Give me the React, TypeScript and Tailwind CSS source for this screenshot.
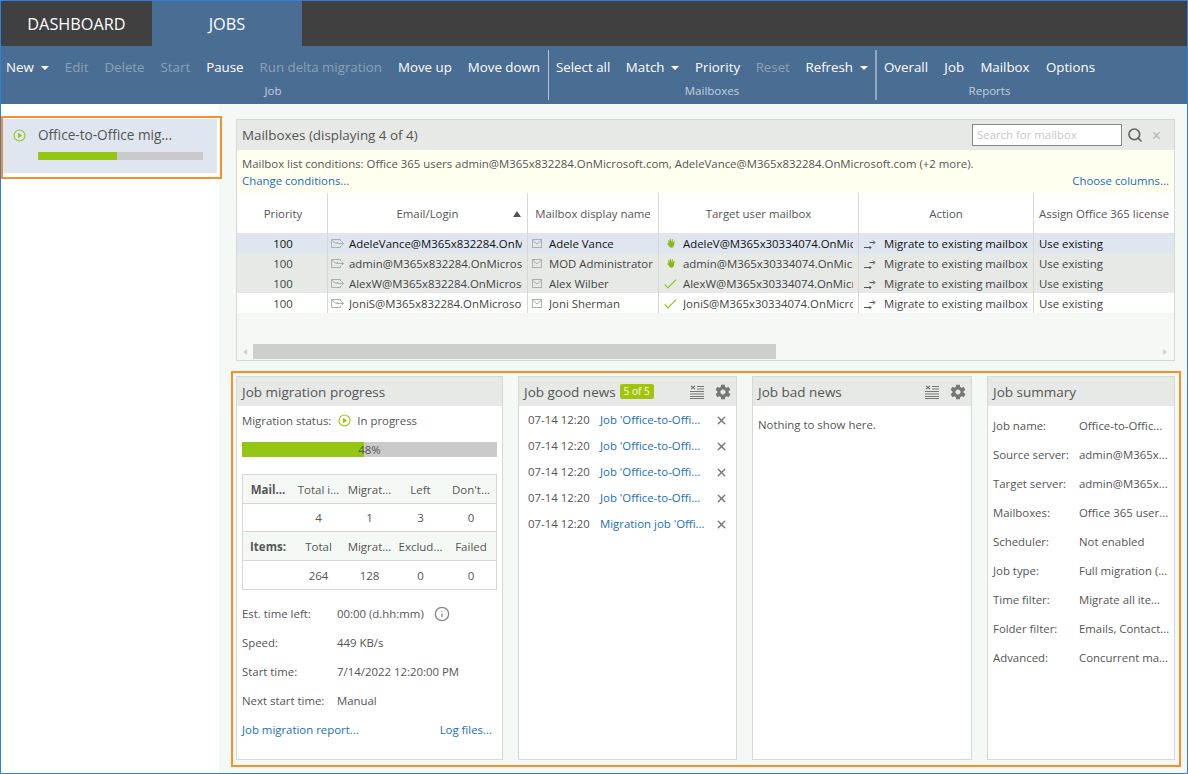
import { Search, X, Info } from "lucide-react";
import { IoMdSettings } from "react-icons/io";
import type { ReactNode } from "react";

// toolbar groups: [label, disabled, has dropdown]
type Btn = [string, boolean?, boolean?];

const jobBtns: Btn[] = [["New", false, true], ["Edit", true], ["Delete", true], ["Start", true], ["Pause"], ["Run delta migration", true], ["Move up"], ["Move down"]];
const mailboxBtns: Btn[] = [["Select all"], ["Match", false, true], ["Priority"], ["Reset", true], ["Refresh", false, true]];
const reportBtns: Btn[] = [["Overall"], ["Job"], ["Mailbox"], ["Options"]];

const rows = [
  { email: "AdeleVance@M365x832284.OnMicrosoft.com", name: "Adele Vance", target: "AdeleV@M365x30334074.OnMicrosoft.com", status: "hand", bg: "bg-[#dfe6ef]", text: "text-[#111]" },
  { email: "admin@M365x832284.OnMicrosoft.com", name: "MOD Administrator", target: "admin@M365x30334074.OnMicrosoft.com", status: "hand", bg: "bg-[#e6e9e6]", text: "text-[#444]" },
  { email: "AlexW@M365x832284.OnMicrosoft.com", name: "Alex Wilber", target: "AlexW@M365x30334074.OnMicrosoft.com", status: "check", bg: "bg-[#e6e9e6]", text: "text-[#444]" },
  { email: "JoniS@M365x832284.OnMicrosoft.com", name: "Joni Sherman", target: "JoniS@M365x30334074.OnMicrosoft.com", status: "check", bg: "bg-white", text: "text-[#444]" },
];

const PlayCircle = () => (
  <svg width="13" height="13" viewBox="0 0 13 13" className="shrink-0">
    <circle cx="6.5" cy="6.5" r="5.5" fill="none" stroke="#94c614" strokeWidth="1.1" />
    <path d="M5 3.8v5.4l4.2-2.7z" fill="#94c614" />
  </svg>
);

const Envelope = () => (
  <svg width="16" height="11" viewBox="0 0 16 11" className="shrink-0">
    <rect x="1.5" y="1.5" width="9" height="8" fill="none" stroke="#aab0aa" />
    <path d="M1.5 2l4.5 4 4.5-4" fill="none" stroke="#aab0aa" />
  </svg>
);

const EnvelopeArrow = () => (
  <svg width="16" height="11" viewBox="0 0 16 11" className="shrink-0">
    <path d="M9.500 3V1.500H.5v8h9V8" fill="none" stroke="#aab0aa" />
    <path d="M.5 2L5 5.500l2-1.500" fill="none" stroke="#aab0aa" />
    <path d="M5.500 5.500h7M10.500 3.500l2 2-2 2" fill="none" stroke="#aab0aa" />
  </svg>
);

const Hand = () => (
  <svg width="11" height="11" viewBox="0 0 12 12" className="shrink-0">
    <path d="M2.800 6.500L2.500 3c0-.7 1-.7 1.100 0l.4 2 .1-3.600c0-.7 1.100-.7 1.100 0L5.800 5l.6-3.500c.1-.7 1.100-.6 1.100.1L7.200 5.300l1.300-2c.4-.6 1.200-.2.9.5L8.700 7.500c-.3 2-1.300 3-2.700 3-1.300 0-2-.6-2.700-1.600L1.500 6.600c-.4-.6.300-1.200.9-.7z" fill="#8fb80f" />
  </svg>
);

const Tick = () => (
  <svg width="13" height="10" viewBox="0 0 13 10" className="shrink-0">
    <path d="M.7 5.500l3.300 3.300L12 .7" fill="none" stroke="#94c614" strokeWidth="1.200" />
  </svg>
);

const Arrows = () => (
  <svg width="14" height="12" viewBox="0 0 14 12" className="shrink-0">
    <path d="M1 9.500h7M6.500 8L8 9.500 6.500 11" fill="none" stroke="#555" />
    <path d="M6.500 4.500h5M10 2.500l2 2-2 2" fill="none" stroke="#555" />
  </svg>
);

const ClearList = () => (
  <svg width="14" height="14" viewBox="0 0 14 14" className="shrink-0">
    <path d="M1 .8l4 3.400M5 .8L1 4.200" stroke="#666" strokeWidth="1.100" />
    <path d="M7 1.500h7M7 4h7M0 6.500h14M0 9h14M0 11.500h14M0 13.500h14" stroke="#777" />
  </svg>
);

const Caret = () => <span className="ml-[7px] mb-[1px] inline-block border-x-[4.5px] border-t-[4.5px] border-x-transparent border-t-white" />;

const ToolGroup = ({ label, btns, className }: { label: string; btns: Btn[]; className: string }) => (
  <div className={`flex flex-col ${className}`}>
    <div className="flex h-[32px] items-center justify-between pt-[12px]">
      {btns.map(([text, disabled, drop]) => (
        <span key={text} className={`flex items-center whitespace-nowrap text-[13.300px] ${disabled ? "text-[#8fa0b3]" : "text-white"}`}>
          {text}
          {drop && <Caret />}
        </span>
      ))}
    </div>
    <div className="mt-[5px] text-center text-[11.500px] leading-[16px] text-[#c3d0dd]">{label}</div>
  </div>
);

const Panel = ({ title, extra, children, className }: { title: string; extra?: ReactNode; children: ReactNode; className: string }) => (
  <div className={`flex flex-col border border-[#d5d8d5] bg-white ${className}`}>
    <div className="flex h-[29px] shrink-0 items-center bg-[#e6e9e6] px-[5px] pt-[1px] text-[13.500px] text-[#555]">
      {title}
      {extra}
    </div>
    {children}
  </div>
);

const NewsTools = () => (
  <div className="ml-auto -mr-[5px] mb-[1px] flex items-center gap-[10px] pr-[4px]">
    <ClearList />
    <IoMdSettings className="text-[18px] text-[#777]" />
  </div>
);

const statCols = "grid grid-cols-[50px_51px_51px_51px_50px] items-center text-center text-[11.500px] text-[#555]";

const StatRow = ({ cells, head }: { cells: string[]; head?: boolean }) => (
  <div className={`${statCols} h-[28.500px] border-b border-[#d5d8d5] pt-[1px] last:border-b-0 ${head ? "bg-[#f5f9f6]" : "bg-white"}`}>
    {cells.map((c, i) => (
      <span key={i} className={i === 0 ? "font-bold" : ""}>{c}</span>
    ))}
  </div>
);

const gridCols = "grid grid-cols-[91px_200px_131px_200px_175px_139px]";

export default function App() {
  const news = ["Job 'Office-to-Offi...", "Job 'Office-to-Offi...", "Job 'Office-to-Offi...", "Job 'Office-to-Offi...", "Migration job 'Offi..."];
  const summary = [
    ["Job name:", "Office-to-Offic..."],
    ["Source server:", "admin@M365x..."],
    ["Target server:", "admin@M365x..."],
    ["Mailboxes:", "Office 365 user..."],
    ["Scheduler:", "Not enabled"],
    ["Job type:", "Full migration (..."],
    ["Time filter:", "Migrate all ite..."],
    ["Folder filter:", "Emails, Contact..."],
    ["Advanced:", "Concurrent ma..."],
  ];

  return (
    <div className="relative flex h-[774px] w-[1188px] flex-col overflow-hidden border border-[#2f80e0] font-['Open_Sans',sans-serif] text-[11.400px] text-[#555]">
      {/* Tabs */}
      <div className="flex h-[45px] shrink-0 bg-[#404040] text-[16.300px] text-white">
        <div className="flex w-[151px] items-center justify-center pt-[1px]">DASHBOARD</div>
        <div className="flex w-[150px] items-center justify-center bg-[#4a6d94] pt-[1px]">JOBS</div>
      </div>

      {/* Toolbar */}
      <div className="flex h-[58px] shrink-0 bg-[#4a6d94] pl-[5px]">
        <ToolGroup label="Job" btns={jobBtns} className="w-[534px]" />
        <div className="ml-[8px] mt-[4px] h-[50px] w-px bg-[#b9c5d2]" />
        <ToolGroup label="Mailboxes" btns={mailboxBtns} className="ml-[7px] w-[312px]" />
        <div className="ml-[7px] mt-[4px] h-[50px] w-[2px] bg-[#94a8bd]" />
        <ToolGroup label="Reports" btns={reportBtns} className="ml-[7px] w-[211px]" />
      </div>

      <div className="flex min-h-0 flex-1">
        {/* Sidebar */}
        <div className="w-[218px] shrink-0 bg-white pt-[15px]">
          <div className="ml-[2px] h-[54px] w-[214px] bg-[#dfe6ef] pl-[10px] pt-[6px]">
            <div className="flex items-center text-[13.600px] text-[#555]">
              <PlayCircle />
              <span className="ml-[12px]">Office-to-Office mig...</span>
            </div>
            <div className="ml-[25px] mt-[7px] h-[8px] w-[165px] bg-[#cacaca]">
              <div className="h-full w-[79px] bg-[#94c614]" />
            </div>
          </div>
        </div>

        {/* Main */}
        <div className="flex flex-1 flex-col bg-[#f5f9f6] pl-[17px] pr-[12px] pt-[15px]">
          <div className="flex h-[242px] flex-col border border-[#d5d8d5]">
            <div className="flex h-[30px] shrink-0 items-center bg-[#e6e9e6] px-[5px] text-[13.400px]">
              Mailboxes (displaying 4 of 4)
              <div className="ml-auto flex h-[22px] w-[150px] items-center border border-[#888] bg-white px-[4px] text-[11.400px] text-[#c8c8c8]">Search for mailbox</div>
              <Search size={16} strokeWidth={2.500} className="ml-[5px] text-[#666]" />
              <X size={11} strokeWidth={3} className="ml-[8px] mr-[7px] text-[#b5b8b5]" />
            </div>
            <div className="h-[43px] shrink-0 bg-[#fffff0] px-[5px] pt-[5px] leading-[17px]">
              <div>Mailbox list conditions: Office 365 users admin@M365x832284.OnMicrosoft.com, AdeleVance@M365x832284.OnMicrosoft.com (+2 more).</div>
              <div className="flex justify-between text-[#1a6fb5]">
                <span>Change conditions...</span>
                <span>Choose columns...</span>
              </div>
            </div>
            <div className={`${gridCols} h-[40px] shrink-0 items-center bg-white text-center`}>
              <div className="flex h-full items-center justify-center border-r border-[#d5d8d5] pl-[2px] pt-[1px]">Priority</div>
              <div className="relative flex h-full items-center justify-center border-r border-[#d5d8d5] pt-[1px]">
                Email/Login
                <span className="absolute right-[6px] top-[18px] border-x-[4px] border-b-[6px] border-x-transparent border-b-[#555]" />
              </div>
              <div className="flex h-full items-center justify-center whitespace-nowrap border-r border-[#d5d8d5] pt-[1px]">Mailbox display name</div>
              <div className="flex h-full items-center justify-center border-r border-[#d5d8d5] pt-[1px]">Target user mailbox</div>
              <div className="flex h-full items-center justify-center border-r border-[#d5d8d5] pt-[1px]">Action</div>
              <div className="flex h-full items-center overflow-hidden whitespace-nowrap pl-[5px] pt-[1px]">Assign Office 365 license</div>
            </div>
            {rows.map((r) => (
              <div key={r.email} className={`${gridCols} h-[20px] shrink-0 items-center ${r.bg} ${r.text}`}>
                <div className="flex h-full items-center justify-center border-r border-[#d5d8d5] pl-[2px] pt-[1px]">100</div>
                <div className="flex h-full items-center border-r border-[#d5d8d5] pl-[3px] pr-[5px] pt-[1px]">
                  <EnvelopeArrow />
                  <span className="ml-[2px] overflow-hidden whitespace-nowrap">{r.email}</span>
                </div>
                <div className="flex h-full items-center border-r border-[#d5d8d5] pl-[3px] pt-[1px]">
                  <Envelope />
                  <span className="ml-[2px] overflow-hidden whitespace-nowrap">{r.name}</span>
                </div>
                <div className="flex h-full items-center border-r border-[#d5d8d5] pl-[5px] pr-[5px] pt-[1px]">
                  <span className="flex w-[19px] shrink-0 items-center">
                    {r.status === "hand" ? <span className="pl-[2px]"><Hand /></span> : <Tick />}
                  </span>
                  <span className="overflow-hidden whitespace-nowrap">{r.target}</span>
                </div>
                <div className="flex h-full items-center whitespace-nowrap border-r border-[#d5d8d5] pl-[4px] pt-[1px]">
                  <Arrows />
                  <span className="ml-[7px]">Migrate to existing mailbox</span>
                </div>
                <div className="pl-[5px] pt-[1px]">Use existing</div>
              </div>
            ))}
            <div className="mt-[31px] flex h-[15px] shrink-0 items-center pl-[6px] pr-[7px]">
              <span className="border-y-[3.500px] border-r-[4px] border-y-transparent border-r-[#d2d6d2]" />
              <div className="ml-[6px] h-full w-[523px] bg-[#ccd0cc]" />
              <span className="ml-auto border-y-[3.500px] border-l-[4px] border-y-transparent border-l-[#d2d6d2]" />
            </div>
          </div>

          {/* Bottom panels */}
          <div className="mt-[15px] flex h-[384px] gap-[15px]">
            <Panel title="Job migration progress" className="w-[267px]">
              <div className="flex items-center px-[5px] pt-[6px]">
                Migration status:
                <span className="ml-[7px]"><PlayCircle /></span>
                <span className="ml-[6px]">In progress</span>
              </div>
              <div className="relative mx-[5px] mt-[13px] h-[15px] bg-[#cacaca]">
                <div className="h-full w-[122px] bg-[#94c614]" />
                <span className="absolute inset-0 text-center leading-[15px]">48%</span>
              </div>
              <div className="mx-[5px] mt-[17px] h-[116px] border border-[#d5d8d5]">
                <StatRow head cells={["Mail...", "Total i...", "Migrat...", "Left", "Don't..."]} />
                <StatRow cells={["", "4", "1", "3", "0"]} />
                <StatRow head cells={["Items:", "Total", "Migrat...", "Exclud...", "Failed"]} />
                <StatRow cells={["", "264", "128", "0", "0"]} />
              </div>
              <div className="mt-[9px] flex flex-col px-[5px] leading-[29px]">
                <div className="flex items-center">
                  <span className="w-[95px]">Est. time left:</span>00:00 (d.hh:mm)
                  <Info size={16} strokeWidth={2} className="ml-[10px] text-[#888]" />
                </div>
                <div className="flex"><span className="w-[95px]">Speed:</span>449 KB/s</div>
                <div className="flex"><span className="w-[95px]">Start time:</span>7/14/2022 12:20:00 PM</div>
                <div className="flex"><span className="w-[95px]">Next start time:</span>Manual</div>
                <div className="flex justify-between pr-[5px] text-[#1a6fb5]">
                  <span>Job migration report...</span>
                  <span>Log files...</span>
                </div>
              </div>
            </Panel>

            <Panel
              title="Job good news"
              className="w-[219px]"
              extra={
                <>
                  <span className="ml-[4px] mb-[2px] flex h-[15px] w-[34px] items-center justify-center rounded-[2px] bg-[#a0c40a] text-[10px] text-white">5 of 5</span>
                  <NewsTools />
                </>
              }
            >
              <div className="pt-[1px]">
                {news.map((n, i) => (
                  <div key={i} className="flex h-[26px] items-center pl-[9px]">
                    <span className="w-[72px]">07-14 12:20</span>
                    <span className="w-[112px] whitespace-nowrap text-[#1a6fb5]">{n}</span>
                    <X size={13} strokeWidth={2.500} className="ml-[3px] text-[#777]" />
                  </div>
                ))}
              </div>
            </Panel>

            <Panel title="Job bad news" className="w-[220px]" extra={<NewsTools />}>
              <div className="px-[5px] pt-[10px]">Nothing to show here.</div>
            </Panel>

            <Panel title="Job summary" className="w-[188px]">
              <div className="pt-[5px]">
                {summary.map(([k, v]) => (
                  <div key={k} className="flex h-[29px] items-center whitespace-nowrap pl-[5px]">
                    <span className="w-[86px]">{k}</span>
                    {v}
                  </div>
                ))}
              </div>
            </Panel>
          </div>
        </div>
      </div>

      {/* orange highlight boxes */}
      <div className="pointer-events-none absolute left-0 top-[115px] h-[63px] w-[221px] border-2 border-[#f7902a]" />
      <div className="pointer-events-none absolute left-[230px] top-[370px] h-[396px] w-[950px] border-2 border-[#f7902a]" />
    </div>
  );
}
